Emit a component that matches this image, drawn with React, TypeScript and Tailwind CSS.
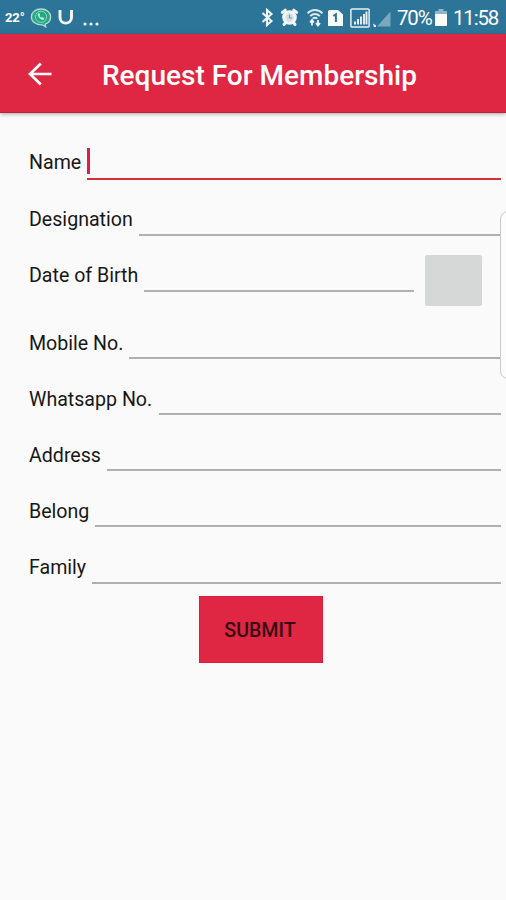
import { clsx } from 'clsx';

const fields = [
    { label: 'Name', row: 'h-[56px]', width: 'w-[58px]', offset: 'pb-[5px]', active: true },
    { label: 'Designation', row: 'h-[56px]', width: 'w-[110px]', offset: 'pb-[4px]' },
    { label: 'Date of Birth', row: 'h-[56px]', width: 'w-[115px]', offset: 'pb-[4px]', picker: true },
    { label: 'Mobile No.', row: 'h-[67px]', width: 'w-[100px]', offset: 'pb-[3px]' },
    { label: 'Whatsapp No.', row: 'h-[56px]', width: 'w-[130px]', offset: 'pb-[3px]' },
    { label: 'Address', row: 'h-[56px]', width: 'w-[78px]', offset: 'pb-[3px]' },
    { label: 'Belong', row: 'h-[56px]', width: 'w-[66px]', offset: 'pb-[3px]' },
    { label: 'Family', row: 'h-[57px]', width: 'w-[63px]', offset: 'pb-[4px]' },
];

function ChatIcon() {
    return (
        <svg width="22" height="20" viewBox="0 0 22 20" className="ml-[9px] mt-px">
            <path d="M11 1c5.4 0 9.600 3.400 9.600 7.900 0 3.300-2.200 6-5.500 7.200l.6 2.800-3.400-2.100C6.200 17.100 1.400 13.600 1.400 8.900 1.400 4.400 5.600 1 11 1z" fill="#22a884" stroke="#b9d9d3" strokeWidth="1.300" />
            <circle cx="11" cy="8.800" r="5.600" fill="none" stroke="#8bd7ba" strokeWidth="1" />
            <path d="M8 5.500c-1 2.500 2.500 6.600 5.700 6.300l.3-1.900-2-.8-.9.7-1.700-1.900.7-.9-.8-1.800z" fill="#c9eee0" />
        </svg>
    );
}

function BluetoothIcon() {
    return (
        <svg width="13" height="19" viewBox="0 0 13 19" className="mr-[6px]">
            <path d="M1.500 5l9 8-4.500 4V2l4.500 4-9 8" fill="none" stroke="#eef5f8" strokeWidth="2.100" />
        </svg>
    );
}

function AlarmIcon() {
    return (
        <svg width="19" height="19" viewBox="0 0 19 19" className="mr-[7px]">
            <path d="M2.300 4.400l3-2.200M16.700 4.400l-3-2.200M4 16.500l2-2.500M15 16.500l-2-2.500" stroke="#eef5f8" strokeWidth="3" strokeLinecap="round" />
            <circle cx="9.500" cy="9.500" r="7.300" fill="#f1f7f9" />
            <circle cx="9.500" cy="9.500" r="4.200" fill="#d3e2e9" />
            <path d="M9.500 6.500v3.500h2.500" fill="none" stroke="#6d9cb1" strokeWidth="1.200" />
        </svg>
    );
}

function WifiIcon() {
    return (
        <svg width="18" height="19" viewBox="0 0 18 19" className="mr-[4px]">
            <path d="M1.500 5.300c4.200-4.400 10.800-4.400 15 0M4.200 8.100c2.700-2.800 6.900-2.800 9.600 0M6.700 10.700c1.300-1.300 3.300-1.300 4.600 0" fill="none" stroke="#dbe8ee" strokeWidth="1.900" />
            <path d="M6 17.500v-5M4 14.500l2-2.500 2 2.500M12 12v5.500M10 15l2 2.500 2-2.500" fill="none" stroke="#eef5f8" strokeWidth="1.800" />
        </svg>
    );
}

function SimIcon() {
    return (
        <svg width="15" height="18" viewBox="0 0 15 18" className="mr-[7px]">
            <path d="M1 1h9l5 4.500V17H0V2z" fill="#f7fafb" />
            <path d="M5.300 7l2.600-1.700V13" fill="none" stroke="#2d7598" strokeWidth="2" />
        </svg>
    );
}

function SignalIcon() {
    return (
        <svg width="42" height="20" viewBox="0 0 42 20" className="mr-[5px]">
            <rect x=".9" y=".9" width="18.200" height="18.200" rx="1.200" fill="none" stroke="#e5eff3" strokeWidth="1.500" />
            <path d="M5 16.500v-3M8 16.500v-5.500M11 16.500V8.500M14 16.500V6M16.500 16.500V3.500" stroke="#eaf2f5" strokeWidth="1.900" />
            <path d="M27 18.500h13.500V3.500z" fill="#79a9bd" />
            <path d="M23 15.500l3 2v1.500h-2z" fill="#edf5f8" />
        </svg>
    );
}

function BatteryIcon() {
    return (
        <svg width="12" height="19" viewBox="0 0 12 19" className="mr-[6px]">
            <path d="M3.500 1h5v2H12v5H0V3h3.500z" fill="#8db7c8" />
            <rect y="6" width="12" height="12" rx=".8" fill="#fafcfc" />
        </svg>
    );
}

function StatusBar() {
    return (
        <div className="flex h-[34px] items-center justify-between bg-[#2d7598] pt-px text-white">
            <div className="flex h-full items-center">
                <span className="w-[21px] whitespace-nowrap pl-[5px] text-[13px] font-bold leading-none tracking-[-0.1px]">22°</span>
                <ChatIcon />
                <svg width="16" height="17" viewBox="0 0 16 17" className="ml-[6px]">
                    <path d="M2 1v7.500c0 7.500 11.500 7.500 11.500 0V1" fill="none" stroke="#f5f9fb" strokeWidth="2.900" />
                </svg>
                <svg width="17" height="4" viewBox="0 0 17 4" className="ml-[9px] mt-[12px]">
                    <circle cx="2" cy="2" r="1.600" fill="#edf5f8" />
                    <circle cx="8" cy="2" r="1.600" fill="#edf5f8" />
                    <circle cx="14" cy="2" r="1.600" fill="#edf5f8" />
                </svg>
            </div>
            <div className="flex h-full items-center">
                <BluetoothIcon />
                <AlarmIcon />
                <WifiIcon />
                <SimIcon />
                <SignalIcon />
                <span className="w-[38px] whitespace-nowrap pt-[2px] text-[20.500px] leading-none tracking-[-1.200px]">70%</span>
                <BatteryIcon />
                <span className="w-[53px] whitespace-nowrap pt-[2px] text-[20.500px] leading-none tracking-[-1.200px]">11:58</span>
            </div>
        </div>
    );
}

export default function App() {
    return (
        <div className="relative flex h-[900px] w-[506px] flex-col overflow-hidden bg-[#fafafa] font-['Roboto',sans-serif] text-[#171717]">
            <StatusBar />

            {/* App bar */}
            <header className="flex h-[79px] shrink-0 items-center border-b border-[#c91c3a] bg-[#df2643] pl-[28px] pt-px text-white shadow-[0_1px_4px_rgba(0,0,0,0.35)]">
                <button aria-label="Back" className="mr-[50px]">
                    <svg width="24" height="24" viewBox="0 0 24 24">
                        <path d="M23.500 12H2.500M12.800 1.500L2 12l10.800 10.500" fill="none" stroke="#fff" strokeWidth="2.700" />
                    </svg>
                </button>
                <h1 className="whitespace-nowrap pt-[4px] text-[28px] font-medium leading-none">Request For Membership</h1>
            </header>

            {/* Membership form */}
            <form className="flex flex-col pl-[29px] pr-[5px] pt-[11px]">
                {fields.map((field) => (
                    <div key={field.label} className={clsx('flex items-end', field.row)}>
                        <label className={clsx('shrink-0 whitespace-nowrap text-[19.600px] leading-[24px]', field.width, field.offset)}>
                            {field.label}
                        </label>
                        <div
                            className={clsx(
                                'flex h-[36px] flex-1 items-start border-b-2',
                                field.active ? 'border-[#d32f35]' : 'border-[#b0b0b0]',
                            )}
                        >
                            {field.active && <span className="mt-[4px] h-[26px] w-[3px] bg-[#dc2047]" />}
                        </div>
                        {field.picker && (
                            <button type="button" aria-label="Choose date" className="mb-[-14px] ml-[11px] mr-[19px] h-[51px] w-[57px] rounded-[2px] bg-[#d6d7d7]" />
                        )}
                    </div>
                ))}
                <button type="button" className="ml-[170px] mt-[12px] h-[67px] w-[124px] border border-[#dc1d3e] bg-[#df2643] pr-[2px] pt-[2px] text-[19.600px] font-medium leading-none text-[#380a12]">
                    SUBMIT
                </button>
            </form>

            {/* Edge panel handle */}
            <div className="absolute right-[-10px] top-[211px] h-[168px] w-[16px] rounded-[8px] border border-[#c9c9c9] bg-[#fcfcfc]" />
        </div>
    );
}
